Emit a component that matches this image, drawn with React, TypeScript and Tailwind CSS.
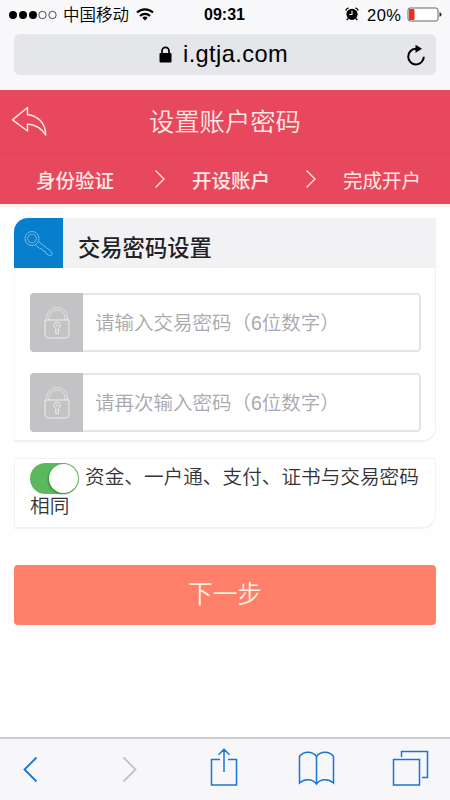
import { useState } from "react";

const steps = [
  { label: "身份验证", style: "font-medium ml-[36px]", arrow: "ml-[40px]" },
  { label: "开设账户", style: "font-medium ml-[26px]", arrow: "ml-[35px]" },
  { label: "完成开户", style: "font-normal ml-[26px]", arrow: "" },
];

function StatusBar() {
  return (
    <div className="flex h-[30px] items-center text-black">
      <svg className="ml-[9px] shrink-0" width="48" height="10" viewBox="0 0 48 10">
        <circle cx="4" cy="5" r="4" />
        <circle cx="14" cy="5" r="4" />
        <circle cx="24" cy="5" r="4" />
        <circle cx="33.5" cy="5" r="3.7" fill="none" stroke="#222" strokeWidth="0.8" />
        <circle cx="43.5" cy="5" r="3.7" fill="none" stroke="#222" strokeWidth="0.8" />
      </svg>
      <span className="ml-[6px] w-[67px] whitespace-nowrap text-[16.5px] font-[350] leading-[30px]">中国移动</span>
      <svg className="ml-[6px] mb-[2px] shrink-0" width="18" height="13" viewBox="0 0 18 13">
        <g fill="none" stroke="#000" strokeWidth="2.1">
          <path d="M1 4.6a11.5 11.5 0 0 1 16 0" />
          <path d="M4 7.9a7.2 7.2 0 0 1 10 0" />
        </g>
        <path d="M9 12.6 6.3 9.8a3.9 3.9 0 0 1 5.4 0z" />
      </svg>
      <span className="ml-[50px] w-[43px] whitespace-nowrap text-[16px] font-bold leading-[30px]">09:31</span>
      <svg className="ml-[98px] mb-[2px] shrink-0" width="14" height="14" viewBox="0 0 14 14">
        <circle cx="7" cy="7.3" r="5.6" />
        <path d="M.7 3.7A4 4 0 0 1 3.7.8M10.3.8a4 4 0 0 1 3 2.9M3 11.5l-1.3 1.7M11 11.5l1.3 1.7" stroke="#000" strokeWidth="1.3" fill="none" />
        <path d="M7 3.8v3.7H4.3" stroke="#fff" strokeWidth="1.1" fill="none" />
      </svg>
      <span className="ml-[8px] w-[36px] whitespace-nowrap text-[16.5px] leading-[30px] tracking-[0.5px]">20%</span>
      <svg className="ml-[4px] mb-[1px] shrink-0" width="36" height="15" viewBox="0 0 36 15">
        <rect x="1" y="1" width="30" height="13" rx="2.2" fill="#fff" stroke="#555" strokeWidth="0.9" />
        <rect x="2" y="2" width="5.5" height="11" rx="0.8" fill="#ee2d24" />
        <path d="M32.5 5.3q2 .4 2 2.200t-2 2.200z" fill="#222" />
      </svg>
    </div>
  );
}

function AddressBar() {
  return (
    <div className="mx-[14px] mt-[4px] flex h-[41px] items-center rounded-[6px] bg-[#e5e6ea] text-black">
      <svg className="ml-[145px] shrink-0" width="13" height="17" viewBox="0 0 13 17">
        <rect x="0.5" y="7" width="12" height="9.5" rx="1" />
        <path d="M3 7.500V4.800a3.500 3.500 0 0 1 7 0v2.700" fill="none" stroke="#000" strokeWidth="1.7" />
      </svg>
      <span className="ml-[11px] w-[106px] whitespace-nowrap text-[23.6px] leading-[41px] tracking-[0.4px]">i.gtja.com</span>
      <svg className="ml-[117px] shrink-0" width="20" height="22" viewBox="0 0 20 22">
        <path d="M11 4.800H9.700A7.800 7.800 0 1 0 17.800 12.700" fill="none" stroke="#000" strokeWidth="2" />
        <path d="M9.500.7 16 4.800 9.500 8.700z" />
      </svg>
    </div>
  );
}

function LockIcon() {
  return (
    <svg width="26" height="32" viewBox="0 0 26 32" fill="none" stroke="#eee" strokeWidth="1">
      <path d="M1 13h24v14.500a3.500 3.500 0 0 1-3.500 3.500h-17A3.500 3.500 0 0 1 1 27.500z" />
      <path d="M2.500 13v-2a10.500 10.500 0 0 1 21 0v2M5 13v-2a8 8 0 0 1 16 0v2" opacity="0.7" />
      <path d="M11.800 21.200a3.200 3.200 0 1 1 2.600 0v5.300h-2.600zM12 18.200h2" />
    </svg>
  );
}

function PasswordInput({ placeholder }: { placeholder: string }) {
  const [value, setValue] = useState("");

  return (
    <div className="flex h-[59px] overflow-hidden rounded-[4px]">
      <div className="flex w-[53px] shrink-0 items-center justify-center bg-[#c3c3c5]">
        <LockIcon />
      </div>
      <input
        className="min-w-0 flex-1 rounded-r-[4px] border-2 border-l-0 border-[#e5e5e9] bg-white pl-[12px] pt-[3px] text-[19.5px] font-[350] text-[#555] outline-none placeholder:text-[#a8a8ad]"
        type="text"
        placeholder={placeholder}
        value={value}
        onChange={(e) => setValue(e.target.value)}
      />
    </div>
  );
}

function Toolbar() {
  return (
    <div className="mt-auto flex h-[63px] shrink-0 border-t-2 border-[#cdcdd1] bg-[#f7f7fa]">
      <svg className="ml-[22px] mt-[16px]" width="16" height="28" viewBox="0 0 16 28">
        <path d="M14.500 2.500 2.500 14.500l12 12" fill="none" stroke="#1c75d1" strokeWidth="1.8" />
      </svg>
      <svg className="ml-[84px] mt-[16px]" width="16" height="28" viewBox="0 0 16 28">
        <path d="m1.500 2.500 12 12-12 12" fill="none" stroke="#c2c2c6" strokeWidth="1.8" />
      </svg>
      <svg className="ml-[71px] mt-[7px]" width="30" height="40" viewBox="0 0 30 40">
        <path d="M11 13.500H2.500v25.500h25V13.500H19M15 26V3M9.500 8.700 15 3.200l5.500 5.500" fill="none" stroke="#1c75d1" strokeWidth="1.5" />
      </svg>
      <svg className="ml-[59px] mt-[11px]" width="37" height="36" viewBox="0 0 37 36">
        <path d="M18.500 6.500C14.500.9 5.500.9 1.500 6.500V33c5-4.500 13-4.500 17 1 4-5.500 12-5.500 17-1V6.500c-4-5.600-13-5.600-17 0V34" fill="none" stroke="#1c75d1" strokeWidth="1.5" />
      </svg>
      <svg className="ml-[57px] mt-[10px]" width="37" height="37" viewBox="0 0 37 37">
        <path d="M1.500 10.500h26V36h-26zM9.500 8V2.500h26v26H30" fill="none" stroke="#1c75d1" strokeWidth="1.5" />
      </svg>
    </div>
  );
}

export default function App() {
  const [same, setSame] = useState(true);

  return (
    <div className="flex h-[800px] w-[450px] flex-col overflow-hidden bg-[#fefefe] font-['Liberation_Sans','Noto_Sans_CJK_SC',sans-serif]">
      <div className="h-[90px] shrink-0 bg-[#f8f8fa]">
        <StatusBar />
        <AddressBar />
      </div>

      <header className="h-[114px] shrink-0 bg-[#e8485d] text-[#ffe9e4]">
        <div className="flex h-[64px] items-start border-b border-[#dc4358]">
          <svg className="ml-[11px] mt-[16px] shrink-0" width="37" height="31" viewBox="0 0 37 31">
            <path d="M1.500 13.800 16.500 1.500v7.200c10 .8 18 8 18.200 20.300C30.500 22.500 25 18.700 16.500 18v7z" fill="none" stroke="#ffe4df" strokeWidth="1.5" strokeLinejoin="round" />
          </svg>
          <h1 className="ml-[101px] whitespace-nowrap text-[25.3px] font-[350] leading-[64px]">设置账户密码</h1>
        </div>
        <div className="flex h-[50px] items-center text-[19.5px]">
          {steps.map((step, i) => (
            <div key={step.label} className="flex items-center">
              <span className={`${step.style} w-[78px] whitespace-nowrap pt-[4px] leading-[50px]`}>{step.label}</span>
              {i < steps.length - 1 && (
                <svg className={step.arrow} width="12" height="20" viewBox="0 0 12 20">
                  <path d="m1.500 1.500 8.500 8.500-8.500 8.500" fill="none" stroke="#ffe4df" strokeWidth="1.3" />
                </svg>
              )}
            </div>
          ))}
        </div>
      </header>
      <div className="h-[3px] shrink-0 bg-[#fff0e8]" />

      <main className="px-[14px] pt-[11px]">
        <section className="h-[224px] overflow-hidden rounded-tl-[14px] rounded-br-[14px] border-b-2 border-r border-[#f0f0f3] bg-white shadow-[inset_1px_0_0_#f6f6f8]">
          <div className="flex h-[50px] bg-[#f2f2f5]">
            <div className="flex w-[49px] items-center justify-center bg-[#087fcd]">
              <svg width="31" height="27" viewBox="0 0 31 27" fill="none" stroke="#75bce8" strokeWidth="1">
                <circle cx="9" cy="8.5" r="7" />
                <circle cx="9" cy="8.5" r="4.3" />
                <path d="m15.300 11.500 12.500 9.500 1.700 3.500-2.500 1.500-4-2.500-.8-2.300-2.500-.4-1-2.200-2-.2-4.200-3.300" />
              </svg>
            </div>
            <h2 className="ml-[15px] pt-[11px] text-[22.3px] font-medium leading-[40px] text-[#222226]">交易密码设置</h2>
          </div>
          <div className="flex flex-col gap-[21px] pl-[16px] pr-[14px] pt-[25px]">
            <PasswordInput placeholder="请输入交易密码（6位数字）" />
            <PasswordInput placeholder="请再次输入密码（6位数字）" />
          </div>
        </section>

        <section className="mt-[16px] h-[71px] rounded-br-[14px] border border-b-2 border-[#f2f2f5] bg-white pl-[15px]">
          <p className="pt-[4px] text-[19.65px] font-[350] leading-[29px] text-[#333337] whitespace-nowrap">
            <button
              className="mr-[6px] inline-flex h-[31px] w-[49px] items-center justify-end rounded-full bg-[#5bb85f] p-[1px] align-middle -my-[2px]"
              type="button"
              role="switch"
              aria-checked={same}
              onClick={() => setSame(!same)}
            >
              <span className={same ? "h-[29px] w-[29px] rounded-full bg-white shadow-[-1px_1px_2px_#3b883f]" : "mr-auto h-[29px] w-[29px] rounded-full bg-white"} />
            </button>
            资金、一户通、支付、证书与交易密码
            <br />
            相同
          </p>
        </section>

        <button className="mt-[36px] h-[60px] w-full rounded-[4px] bg-[#ff7f68] text-[24.7px] font-[350] text-[#fff0e4]" type="button">
          下一步
        </button>
      </main>

      <Toolbar />
    </div>
  );
}
